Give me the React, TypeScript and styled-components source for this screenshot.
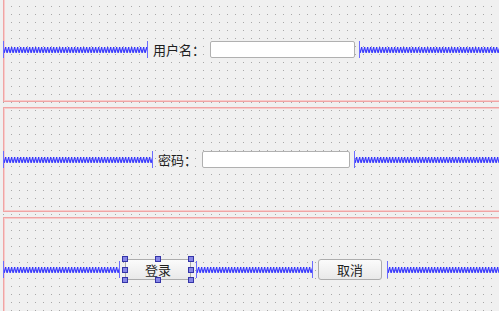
import { useId } from 'react';
import styled, { createGlobalStyle } from 'styled-components';

const GlobalStyle = createGlobalStyle`
  html, body {
    margin: 0;
    padding: 0;
    background: #f0f0f0;
  }
  #root {
    width: 499px;
    height: 311px;
    overflow: hidden;
  }
`;

const Canvas = styled.div`
  width: 499px;
  height: 311px;
  overflow: hidden;
  background-color: #a8a8a8;
  background-image: linear-gradient(to right, transparent 1px, #f0f0f0 1px),
    linear-gradient(to bottom, transparent 1px, #f0f0f0 1px);
  background-size: 8px 8px;
  background-position: 3px 6px;
  font-family: 'Noto Sans CJK SC', 'Noto Sans', sans-serif;
  font-size: 13px;
  color: #1e1e1e;
`;

const Stack = styled.div`
  width: 530px;
  margin-top: -3px;
  padding-left: 3px;
  display: flex;
  flex-direction: column;
  gap: 5px;
`;

const LayoutFrame = styled.div`
  height: 105px;
  box-sizing: border-box;
  box-shadow: inset 0 0 0 1px #f0a4a4, inset 0 0 0 2px #f7cccc;
  display: flex;
  align-items: center;
`;

const SpacerBox = styled.div<{ $width?: number }>`
  ${(p) => (p.$width ? `width: ${p.$width}px; flex: none;` : 'flex: 1;')}
  height: 17px;
  box-sizing: border-box;
  border-left: 1px solid #6b6bff;
  border-right: 1px solid #6b6bff;
  display: flex;
  align-items: center;
`;

const Spring = styled.svg`
  display: block;
  width: 100%;
  height: 6px;
`;

const Spacer = ({ width }: { width?: number }) => {
  const id = useId().replace(/:/g, '');
  return (
    <SpacerBox $width={width}>
      <Spring>
        <defs>
          <pattern id={id} width="3" height="6" patternUnits="userSpaceOnUse">
            <path d="M0,6 L1.6,0 M1.6,0 L3,6" fill="none" stroke="#2e2eff" strokeWidth="1" />
            <path d="M0.4,6 L2,0" fill="none" stroke="#2e2eff" strokeWidth="0.6" />
          </pattern>
        </defs>
        <rect x="0" y="0" width="100%" height="6" fill={`url(#${id})`} />
      </Spring>
    </SpacerBox>
  );
};

const Label = styled.span`
  margin: 0 5px;
  line-height: 17px;
  white-space: nowrap;
`;

const TextInput = styled.input<{ $width: number }>`
  width: ${(p) => p.$width}px;
  height: 17px;
  box-sizing: border-box;
  margin: 0 4px 0 0;
  padding: 0 3px;
  border: 1px solid #b0b0b0;
  border-radius: 2px;
  background: #ffffff;
  outline: none;
  font: inherit;
`;

const ButtonSlot = styled.div<{ $width: number }>`
  position: relative;
  width: ${(p) => p.$width}px;
  height: 21px;
  margin: 0 5px;
  flex: none;
`;

const PushButton = styled.button`
  width: 100%;
  height: 100%;
  box-sizing: border-box;
  border: 1px solid #adadad;
  border-radius: 3px;
  background: linear-gradient(#fbfbfb, #e9e9e9);
  font: inherit;
  color: #1e1e1e;
  padding: 0;
  line-height: 19px;
`;

type Spot = 'start' | 'mid' | 'end';

const place = (s: Spot) =>
  s === 'start' ? '-3px' : s === 'mid' ? 'calc(50% - 3px)' : 'calc(100% - 3px)';

const Handle = styled.span<{ $x: Spot; $y: Spot }>`
  position: absolute;
  left: ${(p) => place(p.$x)};
  top: ${(p) => place(p.$y)};
  width: 6px;
  height: 6px;
  box-sizing: border-box;
  border: 1px solid #3434a8;
  background: #8686e6;
`;

const handleSpots: [Spot, Spot][] = [
  ['start', 'start'],
  ['mid', 'start'],
  ['end', 'start'],
  ['start', 'mid'],
  ['end', 'mid'],
  ['start', 'end'],
  ['mid', 'end'],
  ['end', 'end'],
];

export default function App() {
  return (
    <>
      <GlobalStyle />
      <Canvas>
        <Stack>
          <LayoutFrame>
            <Spacer width={145} />
            <Label>用户名：</Label>
            <TextInput $width={145} />
            <Spacer />
          </LayoutFrame>
          <LayoutFrame>
            <Spacer width={150} />
            <Label>密码：</Label>
            <TextInput $width={148} />
            <Spacer />
          </LayoutFrame>
          <LayoutFrame>
            <Spacer width={117} />
            <ButtonSlot $width={66}>
              <PushButton>登录</PushButton>
              {handleSpots.map(([x, y]) => (
                <Handle key={x + y} $x={x} $y={y} />
              ))}
            </ButtonSlot>
            <Spacer width={117} />
            <ButtonSlot $width={64}>
              <PushButton>取消</PushButton>
            </ButtonSlot>
            <Spacer />
          </LayoutFrame>
        </Stack>
      </Canvas>
    </>
  );
}
